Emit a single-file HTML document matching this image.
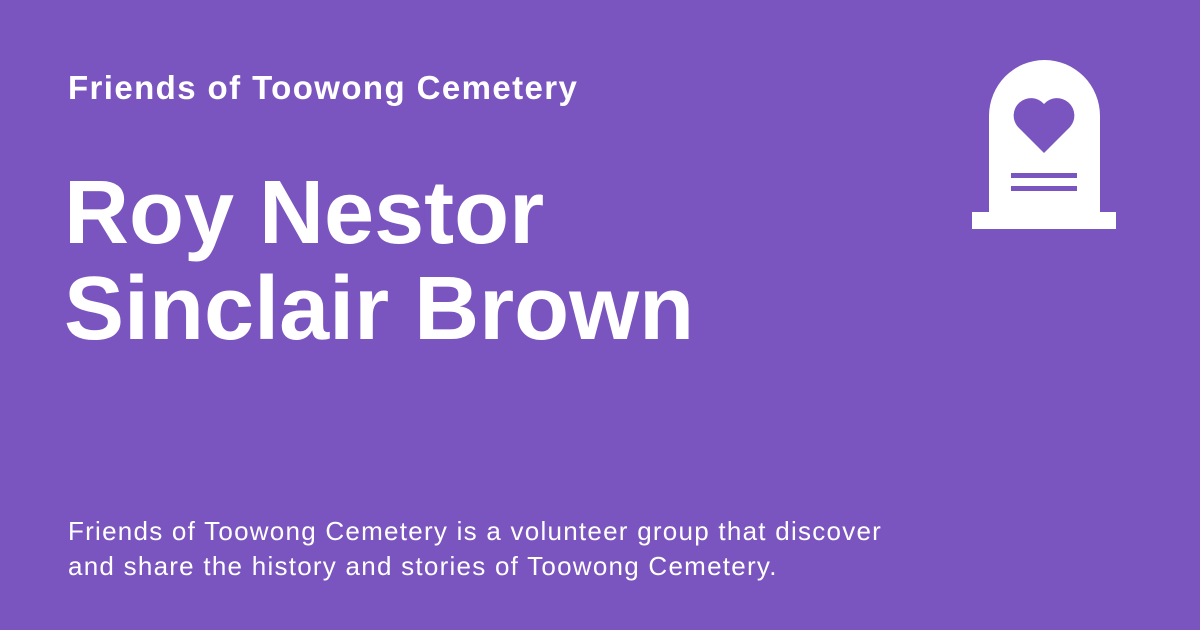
<!DOCTYPE html>
<html><head><style>
html,body{margin:0;padding:0}
body{width:1200px;height:630px;background:#7b55bf;position:relative;overflow:hidden;font-family:"Liberation Sans",sans-serif;color:#fff}
.t{position:absolute;left:68px;top:69px;font-size:33px;font-weight:bold;white-space:nowrap;letter-spacing:1.4px}
.n{position:absolute;left:64px;top:165px;font-size:90px;font-weight:bold;line-height:96px;white-space:nowrap}
.d{position:absolute;left:68px;top:514px;font-size:26px;line-height:35px;white-space:nowrap;letter-spacing:1.25px}
svg{position:absolute;left:0;top:0}
</style></head><body>
<div class="t">Friends of Toowong Cemetery</div>
<div class="n">Roy Nestor<br>Sinclair Brown</div>
<div class="d">Friends of Toowong Cemetery is a volunteer group that discover<br>and share the history and stories of Toowong Cemetery.</div>
<svg width="1200" height="630">
<path d="M989 213 V116 A55.5 56 0 0 1 1100 116 V213 Z" fill="#fff"/>
<rect x="972" y="212" width="144" height="17" fill="#fff"/>
<path d="M1044 153 L1018 127 A16 16 0 0 1 1044 104 A16 16 0 0 1 1070 127 Z" fill="#7b55bf"/>
<rect x="1011" y="173" width="66" height="5" fill="#7b55bf"/>
<rect x="1011" y="186" width="66" height="5" fill="#7b55bf"/>
</svg>
</body></html>
